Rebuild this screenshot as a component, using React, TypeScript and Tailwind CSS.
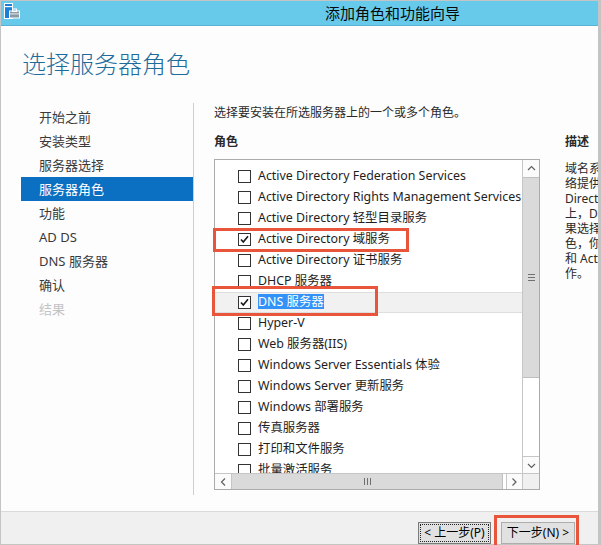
import React from "react";

const rows: { label: string; checked?: boolean; selected?: boolean }[] = [
  { label: "Active Directory Federation Services" },
  { label: "Active Directory Rights Management Services" },
  { label: "Active Directory 轻型目录服务" },
  { label: "Active Directory 域服务", checked: true },
  { label: "Active Directory 证书服务" },
  { label: "DHCP 服务器" },
  { label: "DNS 服务器", checked: true, selected: true },
  { label: "Hyper-V" },
  { label: "Web 服务器(IIS)" },
  { label: "Windows Server Essentials 体验" },
  { label: "Windows Server 更新服务" },
  { label: "Windows 部署服务" },
  { label: "传真服务器" },
  { label: "打印和文件服务" },
  { label: "批量激活服务" },
];

const nav = [
  "开始之前",
  "安装类型",
  "服务器选择",
  "服务器角色",
  "功能",
  "AD DS",
  "DNS 服务器",
  "确认",
  "结果",
];

const desc = [
  "域名系统(DNS)服务器为 TCP/IP 网",
  "络提供名称解析。如果 DNS 服务器与 Active",
  "Directory 域服务安装在同一服务器",
  "上，DNS 服务器更易于管理。如",
  "果选择 Active Directory 域服务角",
  "色，你可以一起安装和配置 DNS 服务器",
  "和 Active Directory 域服务，以协同工",
  "作。",
];

function Checkbox({ checked }: { checked?: boolean }) {
  return (
    <span className="w-[13px] h-[13px] border border-[#333333] bg-white flex items-center justify-center shrink-0">
      {checked && (
        <svg width="11" height="11" viewBox="0 0 11 11">
          <path d="M2 5.5 L4.3 8 L9 2.2" fill="none" stroke="#1a1a1a" strokeWidth="1.6" />
        </svg>
      )}
    </span>
  );
}

function Chevron({ dir }: { dir: "up" | "down" | "left" | "right" }) {
  const d =
    dir === "up"
      ? "M1 5 L4.5 1.5 L8 5"
      : dir === "down"
      ? "M1 2 L4.5 5.5 L8 2"
      : dir === "left"
      ? "M5 0.5 L1.5 4 L5 7.5"
      : "M1.5 0.5 L5 4 L1.5 7.5";
  const w = dir === "up" || dir === "down" ? 9 : 7;
  const h = dir === "up" || dir === "down" ? 7 : 8;
  return (
    <svg width={w} height={h} viewBox={`0 0 ${w} ${h}`}>
      <path d={d} fill="none" stroke="#606060" strokeWidth="1.2" />
    </svg>
  );
}

function TitleIcon() {
  return (
    <svg width="18" height="17" viewBox="0 0 18 17">
      <rect x="2.5" y="1.5" width="8" height="15" fill="#1b7fd6" stroke="#ffffff" />
      <rect x="3" y="4" width="7" height="1.2" fill="#ffffff" />
      <rect x="7" y="8.5" width="11" height="8" fill="#ffffff" />
      <rect x="8" y="9.5" width="9" height="6" fill="#8a9aa8" />
      <rect x="10.5" y="7" width="4" height="2.5" fill="none" stroke="#ffffff" strokeWidth="1" />
      <rect x="8" y="11.5" width="9" height="0.8" fill="#ffffff" />
    </svg>
  );
}

export default function App() {
  return (
    <div className="relative w-[601px] h-[545px] overflow-hidden flex flex-col border-l border-t border-r-[3px] border-[#c4c4c4] bg-[#fdfdfd] font-['Noto_Sans','Noto_Sans_CJK_SC',sans-serif] text-[13px] text-[#1e1e1e]">
      {/* title bar */}
      <div className="h-[25px] shrink-0 bg-[#68caeb] border-b border-[#5bb3d3] flex items-center relative">
        <div className="absolute left-[1px] top-[1px]">
          <TitleIcon />
        </div>
        <div className="pl-[324px] text-[15px] leading-[20px] text-[#0a0a0a] -mt-[1px]">添加角色和功能向导</div>
      </div>

      {/* main */}
      <div className="flex-1 flex flex-col min-h-0">
        <div className="mt-[22px] pl-[21px] h-[32px] text-[24px] leading-[32px] font-light text-[#1d6c9c] whitespace-nowrap">
          选择服务器角色
        </div>
        <div className="mt-[23px] h-[392px] flex">
          {/* nav */}
          <div className="w-[193px] shrink-0 border-r border-[#cfcfcf] pt-[2px]">
            {nav.map((n, i) => (
              <div
                key={n}
                className={
                  "ml-[20px] h-[24px] leading-[24px] pl-[18px] whitespace-nowrap " +
                  (i === 3
                    ? "bg-[#0b6fc2] text-white"
                    : i === 8
                    ? "text-[#c3c3c3]"
                    : "text-[#3a3a3a]")
                }
              >
                {n}
              </div>
            ))}
          </div>

          {/* right */}
          <div className="pl-[20px] flex flex-col min-w-0 text-[12px]">
            <div className="h-[20px] leading-[20px] whitespace-nowrap text-[#2a2a2a]">
              选择要安装在所选服务器上的一个或多个角色。
            </div>
            <div className="mt-[9px] flex">
              <div className="w-[326px] shrink-0 flex flex-col">
                <div className="h-[20px] leading-[20px] font-bold text-[#2a2a2a]">角色</div>
                <div className="mt-[7px] h-[331px] border border-[#ababab] bg-white flex flex-col">
                  <div className="flex h-[313px]">
                    <div className="w-[307px] overflow-hidden pt-[6px] text-[12.4px]">
                      {rows.map((r) => (
                        <div
                          key={r.label}
                          className={
                            "h-[21px] flex items-center pl-[23px] whitespace-nowrap " +
                            (r.selected ? "bg-[#f1f1f1] border-y border-[#dedede]" : "")
                          }
                        >
                          <Checkbox checked={r.checked} />
                          <span className="ml-[7px]">
                            {r.selected ? (
                              <span className="bg-[#3392f7] text-white leading-[15px] inline-block">{r.label}</span>
                            ) : (
                              r.label
                            )}
                          </span>
                        </div>
                      ))}
                    </div>
                    {/* vertical scrollbar */}
                    <div className="w-[17px] border-l border-[#c6c6c6] flex flex-col bg-white">
                      <div className="h-[17px] flex items-center justify-center bg-[#fbfbfb]">
                        <Chevron dir="up" />
                      </div>
                      <div className="h-[201px] bg-[#dadada] border-y border-[#c0c0c0] flex items-center justify-center">
                        <div className="flex flex-col gap-[2px]">
                          <div className="w-[7px] h-px bg-[#707070]" />
                          <div className="w-[7px] h-px bg-[#707070]" />
                          <div className="w-[7px] h-px bg-[#707070]" />
                        </div>
                      </div>
                      <div className="flex-1 bg-white" />
                      <div className="h-[17px] border-t border-[#c6c6c6] flex items-center justify-center bg-[#fbfbfb]">
                        <Chevron dir="down" />
                      </div>
                    </div>
                  </div>
                  {/* horizontal scrollbar */}
                  <div className="h-[17px] border-t border-[#c6c6c6] flex bg-white">
                    <div className="w-[17px] flex items-center justify-center bg-[#fbfbfb] border-r border-[#c6c6c6]">
                      <Chevron dir="left" />
                    </div>
                    <div className="w-[271px] bg-[#dadada] border-r border-[#c0c0c0] flex items-center justify-center">
                      <div className="flex gap-[2px]">
                        <div className="w-px h-[7px] bg-[#707070]" />
                        <div className="w-px h-[7px] bg-[#707070]" />
                        <div className="w-px h-[7px] bg-[#707070]" />
                      </div>
                    </div>
                    <div className="flex-1" />
                    <div className="w-[17px] flex items-center justify-center bg-[#fbfbfb] border-x border-[#c6c6c6]">
                      <Chevron dir="right" />
                    </div>
                    <div className="w-[16px] bg-[#f0f0f0]" />
                  </div>
                </div>
              </div>
              <div className="ml-[25px] flex flex-col">
                <div className="h-[20px] leading-[20px] font-bold text-[#2a2a2a] whitespace-nowrap">描述</div>
                <div className="mt-[9px] text-[#2a2a2a]">
                  {desc.map((l) => (
                    <div key={l} className="h-[15px] leading-[15px] whitespace-nowrap">
                      {l}
                    </div>
                  ))}
                </div>
              </div>
            </div>
          </div>
        </div>
      </div>

      {/* footer */}
      <div className="h-[34px] shrink-0 bg-[#f0f0f0] border-t border-[#dadada] border-b border-b-[#c4c4c4] flex justify-end items-start pt-[10px] pr-[23px] gap-[10px] overflow-hidden">
        <button className="relative w-[73px] h-[22px] bg-[#e1e1e1] border border-[#7a7a7a] text-[12px] leading-[18px] text-black flex items-center justify-center">
          <span className="absolute inset-[1px] border border-dotted border-[#222222]" />
          &lt; 上一步(P)
        </button>
        <button className="w-[74px] h-[22px] bg-[#e1e1e1] border border-[#adadad] text-[12px] leading-[18px] text-black flex items-center justify-center">
          下一步(N) &gt;
        </button>
      </div>

      {/* red highlight overlays */}
      <div className="absolute left-[212px] top-[227px] w-[196px] h-[24px] border-[3px] border-[#e9553b] pointer-events-none" />
      <div className="absolute left-[211px] top-[285px] w-[166px] h-[30px] border-[3px] border-[#e9553b] pointer-events-none" />
      <div className="absolute left-[493px] top-[514px] w-[85px] h-[40px] border-[3px] border-[#e9553b] pointer-events-none" />
    </div>
  );
}
